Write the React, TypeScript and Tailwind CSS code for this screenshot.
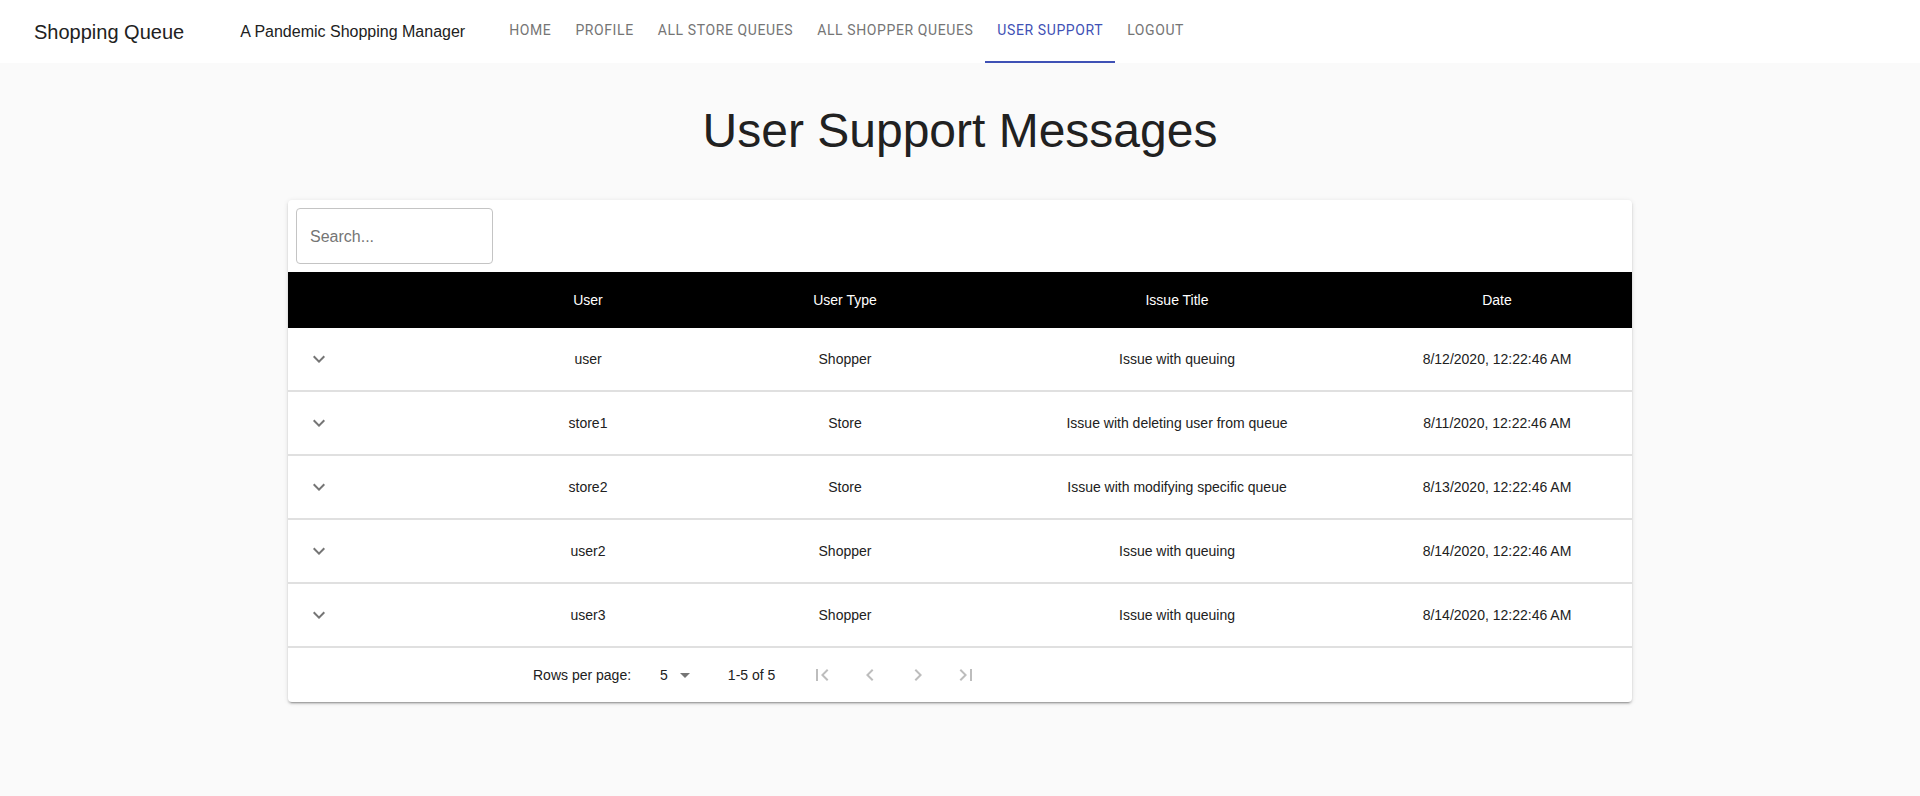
import React from "react";

const rows = [
  { user: "user", type: "Shopper", title: "Issue with queuing", date: "8/12/2020, 12:22:46 AM" },
  { user: "store1", type: "Store", title: "Issue with deleting user from queue", date: "8/11/2020, 12:22:46 AM" },
  { user: "store2", type: "Store", title: "Issue with modifying specific queue", date: "8/13/2020, 12:22:46 AM" },
  { user: "user2", type: "Shopper", title: "Issue with queuing", date: "8/14/2020, 12:22:46 AM" },
  { user: "user3", type: "Shopper", title: "Issue with queuing", date: "8/14/2020, 12:22:46 AM" },
];

const tabs = ["HOME", "PROFILE", "ALL STORE QUEUES", "ALL SHOPPER QUEUES", "USER SUPPORT", "LOGOUT"];

function Icon({ d, className }: { d: string; className?: string }) {
  return (
    <svg viewBox="0 0 24 24" width="24" height="24" className={className} fill="currentColor">
      <path d={d} />
    </svg>
  );
}

export default function App() {
  return (
    <div className="min-h-screen bg-[#fafafa] text-[#212121] font-['Liberation_Sans',Arial,sans-serif]">
      {/* Navbar */}
      <div className="h-[63px] bg-white flex items-stretch">
        <div className="pl-[34px] flex items-center text-[20px] leading-none">Shopping Queue</div>
        <div className="ml-[56px] flex items-center text-[16px] leading-none">A Pandemic Shopping Manager</div>
        <div className="ml-[32px] flex items-stretch font-['Roboto',sans-serif] text-[14px] tracking-[0.6px]">
          {tabs.map((t) => {
            const active = t === "USER SUPPORT";
            return (
              <div
                key={t}
                className={
                  active
                    ? "relative px-3 pb-[2px] flex items-center text-[#3f51b5]"
                    : "relative px-3 pb-[2px] flex items-center text-[#757575]"
                }
              >
                {t}
                {active && <div className="absolute left-0 right-0 bottom-0 h-[2px] bg-[#3f51b5]" />}
              </div>
            );
          })}
        </div>
      </div>

      {/* Heading */}
      <h1 className="mt-[40px] text-center text-[48px] leading-[56px]">User Support Messages</h1>

      {/* Card */}
      <div className="mx-auto mt-[41px] w-[1344px] bg-white rounded-[4px] shadow-[0px_3px_1px_-2px_rgba(0,0,0,0.2),0px_2px_2px_0px_rgba(0,0,0,0.14),0px_1px_5px_0px_rgba(0,0,0,0.12)]">
        <div className="p-2">
          <div className="w-[197px] h-[56px] border border-[#c4c4c4] rounded-[4px] flex items-center pl-[13px] pt-[1px] text-[16px] text-[#757575]">
            Search...
          </div>
        </div>
        <div className="grid grid-cols-[190px_220px_294px_370px_270px] h-[56px] bg-black text-white text-[14px] items-center">
          <div />
          <div className="text-center">User</div>
          <div className="text-center">User Type</div>
          <div className="text-center">Issue Title</div>
          <div className="text-center">Date</div>
        </div>
        {rows.map((r, i) => (
          <div
            key={i}
            className="grid grid-cols-[190px_220px_294px_370px_270px] h-[64px] border-b-2 border-[#e0e0e0] text-[14px] items-center"
          >
            <div className="pl-[19px] flex items-center text-[#757575]">
              <Icon d="M16.59 8.59L12 13.17 7.41 8.59 6 10l6 6 6-6z" />
            </div>
            <div className="text-center pt-[1px]">{r.user}</div>
            <div className="text-center pt-[1px]">{r.type}</div>
            <div className="text-center pt-[1px]">{r.title}</div>
            <div className="text-center pt-[1px]">{r.date}</div>
          </div>
        ))}
        <div className="h-[54px] flex items-center text-[14px]">
          <div className="ml-[245px]">Rows per page:</div>
          <div className="ml-[29px] flex items-center">
            <span>5</span>
            <Icon d="M7 10l5 5 5-5z" className="ml-[5px] text-[#757575]" />
          </div>
          <div className="ml-[31px]">1-5 of 5</div>
          <div className="ml-[35px] flex items-center text-[#bdbdbd] gap-[24px]">
            <Icon d="M18.41 16.59L13.82 12l4.59-4.59L17 6l-6 6 6 6zM6 6h2v12H6z" />
            <Icon d="M15.41 7.41L14 6l-6 6 6 6 1.41-1.41L10.83 12z" />
            <Icon d="M10 6L8.59 7.41 13.17 12l-4.58 4.59L10 18l6-6z" />
            <Icon d="M5.59 7.41L10.18 12l-4.59 4.59L7 18l6-6-6-6zM16 6h2v12h-2z" />
          </div>
        </div>
      </div>
    </div>
  );
}
